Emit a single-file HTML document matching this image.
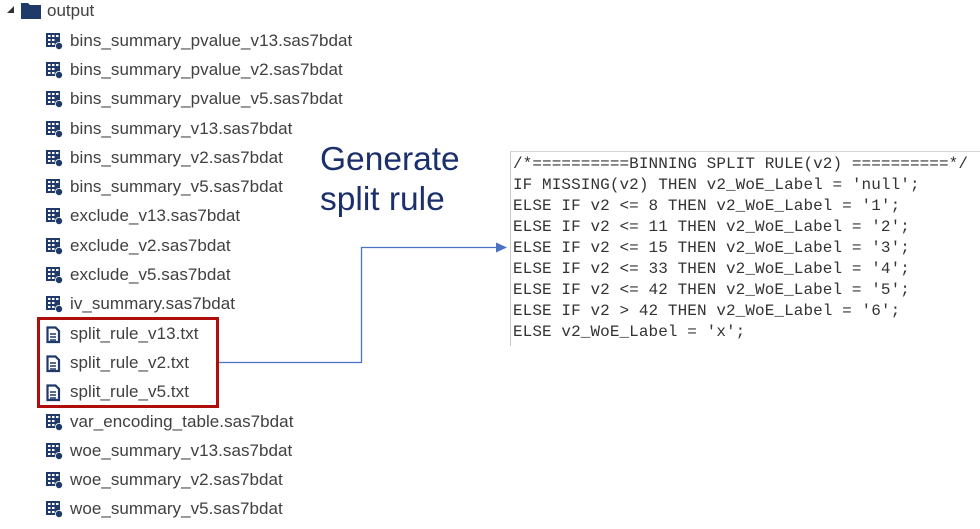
<!DOCTYPE html>
<html><head><meta charset="utf-8"><style>
body{margin:0;width:980px;height:529px;background:#fff;position:relative;overflow:hidden;font-family:"Liberation Sans",sans-serif}
.r{position:absolute;left:46px;height:22px;font-size:17px;color:#404040;white-space:nowrap;line-height:22px;letter-spacing:0.05px}
.r svg{position:absolute;left:0;top:3px}
.r span{position:absolute;left:24px;top:0}
.code{position:absolute;left:510px;top:151px;width:470px;height:194px;border-left:1px solid #c8c8c8;border-top:1px solid #d4d4d4}
.code pre{margin:0;position:absolute;left:2px;top:2px;font-family:"Liberation Mono",monospace;font-size:16px;line-height:21px;color:#333;letter-spacing:0.08px}
</style></head><body>
<div style="position:absolute;left:7px;top:6px;width:0;height:0;border-left:7px solid transparent;border-bottom:7px solid #333;"></div>
<svg style="position:absolute;left:21px;top:2px" width="20" height="17"><path d="M0 1h7l2 2h11v14H0z" fill="#1f3a68"/></svg>
<div style="position:absolute;left:47px;top:0;font-size:17px;color:#404040;line-height:22px">output</div>

<svg width="0" height="0" style="position:absolute"><defs>
<g id="t"><rect x="0" y="0" width="14" height="14" fill="#1f3a68"/><g fill="#fff"><rect x="2" y="2" width="2.5" height="2"/><rect x="6" y="2" width="2.5" height="2"/><rect x="10" y="2" width="2.5" height="2"/><rect x="2" y="6" width="2.5" height="2"/><rect x="6" y="6" width="2.5" height="2"/><rect x="2" y="10" width="2.5" height="2"/><rect x="6" y="10" width="2.5" height="2"/></g><circle cx="13" cy="13" r="4" fill="#fff"/><circle cx="13" cy="13" r="3.2" fill="#1f3a68"/></g>
<g id="f"><path d="M1.5 1.5h8l3.5 3.5v11h-11.5z" fill="none" stroke="#1f3a68" stroke-width="2.2"/><path d="M4 8h6M4 11h6M4 14h6" stroke="#1f3a68" stroke-width="1.6"/></g>
</defs></svg>

<div class="r" style="top:30px"><svg width="18" height="18"><use href="#t"/></svg><span>bins_summary_pvalue_v13.sas7bdat</span></div>
<div class="r" style="top:59px"><svg width="18" height="18"><use href="#t"/></svg><span>bins_summary_pvalue_v2.sas7bdat</span></div>
<div class="r" style="top:88px"><svg width="18" height="18"><use href="#t"/></svg><span>bins_summary_pvalue_v5.sas7bdat</span></div>
<div class="r" style="top:118px"><svg width="18" height="18"><use href="#t"/></svg><span>bins_summary_v13.sas7bdat</span></div>
<div class="r" style="top:147px"><svg width="18" height="18"><use href="#t"/></svg><span>bins_summary_v2.sas7bdat</span></div>
<div class="r" style="top:176px"><svg width="18" height="18"><use href="#t"/></svg><span>bins_summary_v5.sas7bdat</span></div>
<div class="r" style="top:205px"><svg width="18" height="18"><use href="#t"/></svg><span>exclude_v13.sas7bdat</span></div>
<div class="r" style="top:235px"><svg width="18" height="18"><use href="#t"/></svg><span>exclude_v2.sas7bdat</span></div>
<div class="r" style="top:264px"><svg width="18" height="18"><use href="#t"/></svg><span>exclude_v5.sas7bdat</span></div>
<div class="r" style="top:293px"><svg width="18" height="18"><use href="#t"/></svg><span>iv_summary.sas7bdat</span></div>
<div class="r" style="top:323px"><svg width="18" height="18"><use href="#f"/></svg><span>split_rule_v13.txt</span></div>
<div class="r" style="top:352px"><svg width="18" height="18"><use href="#f"/></svg><span>split_rule_v2.txt</span></div>
<div class="r" style="top:381px"><svg width="18" height="18"><use href="#f"/></svg><span>split_rule_v5.txt</span></div>
<div class="r" style="top:411px"><svg width="18" height="18"><use href="#t"/></svg><span>var_encoding_table.sas7bdat</span></div>
<div class="r" style="top:440px"><svg width="18" height="18"><use href="#t"/></svg><span>woe_summary_v13.sas7bdat</span></div>
<div class="r" style="top:469px"><svg width="18" height="18"><use href="#t"/></svg><span>woe_summary_v2.sas7bdat</span></div>
<div class="r" style="top:498px"><svg width="18" height="18"><use href="#t"/></svg><span>woe_summary_v5.sas7bdat</span></div>

<div style="position:absolute;left:37px;top:317px;width:176px;height:85px;border:3px solid #b00d0d"></div>

<svg style="position:absolute;left:0;top:0" width="980" height="529"><path d="M219 362.5H361.5V247.5H497" fill="none" stroke="#4a72c4" stroke-width="1.3"/><path d="M507 247.5l-11-5v10z" fill="#4a72c4"/></svg>

<div style="position:absolute;left:320px;top:140px;font-size:33.5px;line-height:40px;color:#1a2f6b">Generate<br>split rule</div>

<div class="code"><pre>/*==========BINNING SPLIT RULE(v2) ==========*/
IF MISSING(v2) THEN v2_WoE_Label = 'null';
ELSE IF v2 &lt;= 8 THEN v2_WoE_Label = '1';
ELSE IF v2 &lt;= 11 THEN v2_WoE_Label = '2';
ELSE IF v2 &lt;= 15 THEN v2_WoE_Label = '3';
ELSE IF v2 &lt;= 33 THEN v2_WoE_Label = '4';
ELSE IF v2 &lt;= 42 THEN v2_WoE_Label = '5';
ELSE IF v2 &gt; 42 THEN v2_WoE_Label = '6';
ELSE v2_WoE_Label = 'x';</pre></div>
</body></html>
